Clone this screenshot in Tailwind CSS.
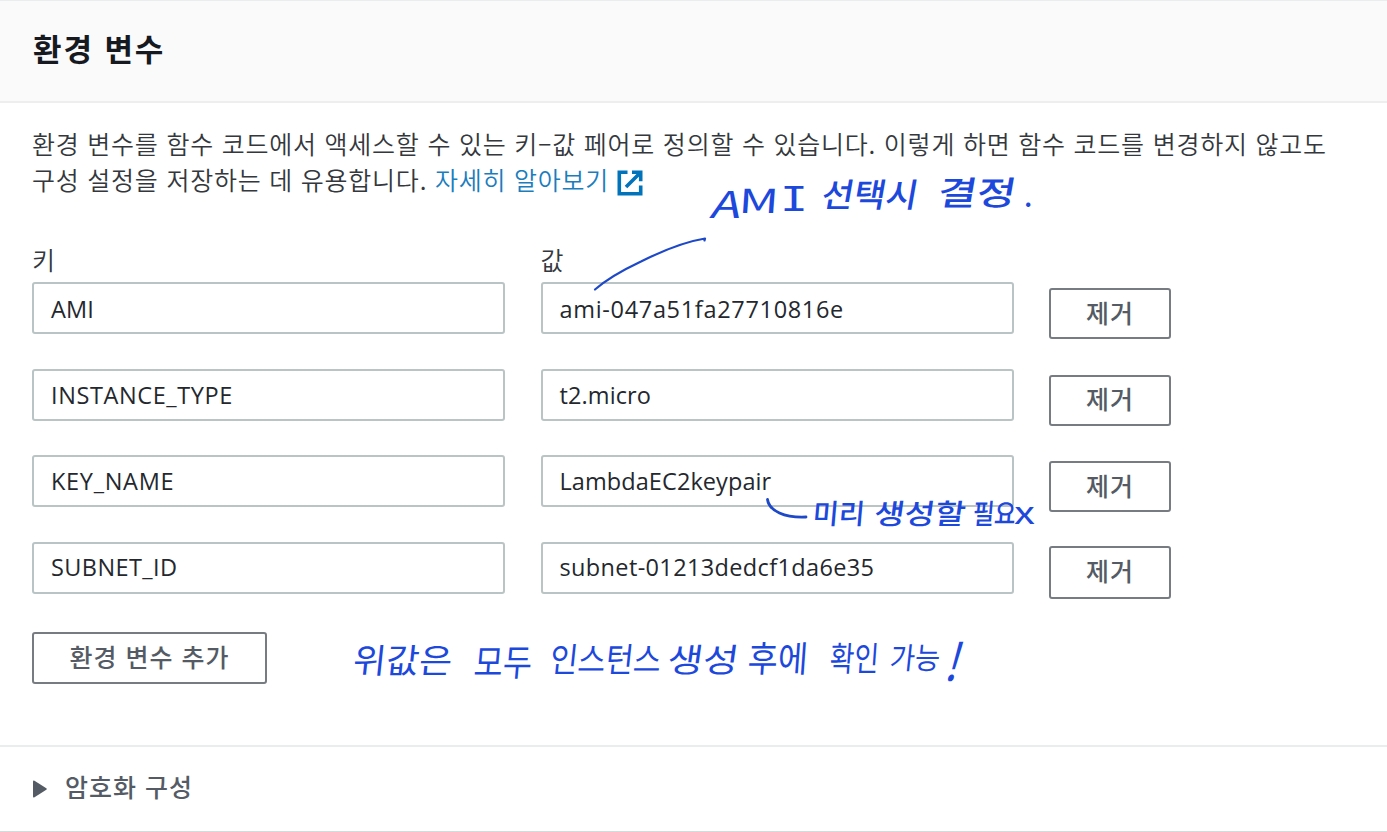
<!DOCTYPE html>
<html lang="ko">
<head>
<meta charset="utf-8">
<title>환경 변수</title>
<script src="https://cdn.jsdelivr.net/npm/@tailwindcss/browser@4"></script>
</head>
<body class="bg-white">
<main class="relative flex h-[832px] w-[1387px] flex-col overflow-hidden border-b border-[#d5dbdb] bg-white font-['Noto_Sans_CJK_KR',sans-serif] text-[#34383d]">
  <header class="flex h-[103px] shrink-0 items-center border-t border-b-2 border-t-[#eaeded] border-b-[#eeeeee] bg-[#fafafa] px-[33px] pb-1.5">
    <h1 class="text-[31px] font-bold tracking-[1.9px] text-[#16191f]">환경 변수</h1>
  </header>

  <section class="flex h-[642px] shrink-0 flex-col px-8 pt-[22px]">
    <p class="text-[25px] leading-9 font-[350] tracking-[0.77px] whitespace-nowrap">환경 변수를 함수 코드에서 액세스할 수 있는 키–값 페어로 정의할 수 있습니다. 이렇게 하면 함수 코드를 변경하지 않고도<br>구성 설정을 저장하는 데 유용합니다. <a class="text-[#1a7dbd]">자세히 알아보기<svg class="ml-[8px] inline-block h-[26px] w-[26px] align-[-6px]" viewBox="0 0 26 26" fill="none" stroke="#0073bb" stroke-width="3.6"><path d="M10.5 2.3H2.3v21.4h21.4v-8.2M15 2.3h8.7v8.9M23 3 9 17"/></svg></a></p>

    <div class="mt-[44px] grid h-[41px] grid-cols-[473px_473px] gap-x-[35.5px] text-[25px] leading-9 font-[350]">
      <span>키</span><span>값</span>
    </div>

    <div class="flex flex-col gap-[34.5px] font-['Open_Sans','Noto_Sans_CJK_KR',sans-serif] text-[23.5px] text-[#24282e]">
      <div class="flex h-[52px] gap-[35.5px]">
        <div class="flex w-[473px] items-center rounded-[3px] border-2 border-[#bac4c4] px-[17px] pt-[3px]"><span class="tracking-[0.1px]">AMI</span></div>
        <div class="flex w-[473px] items-center rounded-[3px] border-2 border-[#bac4c4] px-[17px] pt-[3px]"><span class="tracking-[0.68px]">ami-047a51fa27710816e</span></div>
        <button class="mt-1.5 h-[51px] w-[122px] rounded-[3px] border-2 border-[#777c83] pb-[3px] font-['Noto_Sans_CJK_KR',sans-serif] text-[25px] leading-none font-medium tracking-[1px] text-[#545b64]">제거</button>
      </div>
      <div class="flex h-[52px] gap-[35.5px]">
        <div class="flex w-[473px] items-center rounded-[3px] border-2 border-[#bac4c4] px-[17px] pt-[2px]"><span class="tracking-[0.6px]">INSTANCE_TYPE</span></div>
        <div class="flex w-[473px] items-center rounded-[3px] border-2 border-[#bac4c4] px-[17px] pt-[2px]"><span class="tracking-[0.1px]">t2.micro</span></div>
        <button class="mt-1.5 h-[51px] w-[122px] rounded-[3px] border-2 border-[#777c83] pb-[3px] font-['Noto_Sans_CJK_KR',sans-serif] text-[25px] leading-none font-medium tracking-[1px] text-[#545b64]">제거</button>
      </div>
      <div class="flex h-[52px] gap-[35.5px]">
        <div class="flex w-[473px] items-center rounded-[3px] border-2 border-[#bac4c4] px-[17px] pt-[2px]"><span class="tracking-[0.7px]">KEY_NAME</span></div>
        <div class="flex w-[473px] items-center rounded-[3px] border-2 border-[#bac4c4] px-[17px] pt-[2px]"><span class="tracking-[0.08px]">LambdaEC2keypair</span></div>
        <button class="mt-1.5 h-[51px] w-[122px] rounded-[3px] border-2 border-[#777c83] pb-[3px] font-['Noto_Sans_CJK_KR',sans-serif] text-[25px] leading-none font-medium tracking-[1px] text-[#545b64]">제거</button>
      </div>
      <div class="flex h-[52px] gap-[35.5px]">
        <div class="flex w-[473px] items-center rounded-[3px] border-2 border-[#bac4c4] px-[17px]"><span class="tracking-[0.4px]">SUBNET_ID</span></div>
        <div class="flex w-[473px] items-center rounded-[3px] border-2 border-[#bac4c4] px-[17px]"><span class="tracking-[0.36px]">subnet-01213dedcf1da6e35</span></div>
        <button class="mt-1 h-[53px] w-[122px] rounded-[3px] border-2 border-[#777c83] pb-[3px] font-['Noto_Sans_CJK_KR',sans-serif] text-[25px] leading-none font-medium tracking-[1px] text-[#545b64]">제거</button>
      </div>
    </div>

    <button class="mt-[38px] h-[52px] w-[235px] shrink-0 rounded-[3px] border-2 border-[#777c83] pb-[3px] text-[25px] leading-none font-medium tracking-[1px] text-[#545b64]">환경 변수 추가</button>
  </section>

  <section class="flex flex-1 items-center gap-[17px] border-t-2 border-[#eaeded] px-8 pb-[5px] text-[#545b64]">
    <svg class="mt-1 h-[18px] w-4" viewBox="0 0 16 18" fill="#545b64"><path d="M1 1.6Q1 0 2.5.8L14.3 8.2Q15.5 9 14.3 9.8L2.5 17.2Q1 18 1 16.4Z"/></svg>
    <h2 class="text-[25px] font-medium tracking-[1px]">암호화 구성</h2>
  </section>

  <!-- Pen notes over the form -->
  <svg class="pointer-events-none absolute inset-0 h-[832px] w-[1387px]" viewBox="0 0 1387 832" fill="#1d48dc" font-family="'Noto Sans CJK KR', sans-serif" font-weight="400">
    <g fill="none" stroke="#1d48c8" stroke-width="2.2" stroke-linecap="round" stroke-linejoin="round">
      <path d="M595 289.5C607 279 623 270 641 261.5C662 251 683 242 705 238.5L704.5 240.5"/>
      <path d="M767.5 499.5C769 511 785 518 806 517" stroke-width="2.8"/>
    </g>
    <g font-size="33" font-weight="500">
      <g font-size="37" font-weight="400">
        <text transform="translate(709 218) skewX(-14)" textLength="30" lengthAdjust="spacingAndGlyphs">A</text>
        <text transform="translate(738 213) skewX(-4)" font-size="33" textLength="40" lengthAdjust="spacingAndGlyphs">M</text>
        <text transform="translate(780 211)" font-family="'DejaVu Sans Mono', monospace" font-size="33" textLength="28" lengthAdjust="spacingAndGlyphs">I</text>
      </g>
      <text transform="translate(820 207) skewX(-10)" textLength="96" lengthAdjust="spacingAndGlyphs">선택시</text>
      <text transform="translate(936 205) skewX(-10)" textLength="78" lengthAdjust="spacingAndGlyphs">결정</text>
      <text transform="translate(1024 207)" font-size="28">.</text>
    </g>
    <g font-size="28" font-weight="500">
      <text transform="translate(812 524) skewX(-5)" textLength="52" lengthAdjust="spacingAndGlyphs">미리</text>
      <text transform="translate(873 524) skewX(-8)" textLength="91" lengthAdjust="spacingAndGlyphs">생성할</text>
      <text transform="translate(972 524) skewX(-5)" textLength="43" lengthAdjust="spacingAndGlyphs">필요</text>
      <text transform="translate(1014 524)" font-size="32" font-weight="400" textLength="21" lengthAdjust="spacingAndGlyphs">x</text>
    </g>
    <g font-size="34">
      <text transform="translate(352 673) skewX(-6)" textLength="99" lengthAdjust="spacingAndGlyphs">위값은</text>
      <text transform="translate(473 676) skewX(-5)" font-size="37" textLength="58" lengthAdjust="spacingAndGlyphs">모두</text>
      <text transform="translate(549 672) skewX(-6)" textLength="111" lengthAdjust="spacingAndGlyphs">인스턴스</text>
      <text transform="translate(666 672) skewX(-8)" font-size="33" textLength="71" lengthAdjust="spacingAndGlyphs">생성</text>
      <text transform="translate(747 672) skewX(-4)" font-size="36" textLength="60" lengthAdjust="spacingAndGlyphs">후에</text>
      <text transform="translate(829 671) skewX(-4)" textLength="49" lengthAdjust="spacingAndGlyphs">확인</text>
      <text transform="translate(889 669) skewX(-6)" textLength="50" lengthAdjust="spacingAndGlyphs" font-size="30">가능</text>
      <text transform="translate(943 681) skewX(-16)" font-size="52" textLength="14" lengthAdjust="spacingAndGlyphs">!</text>
    </g>
  </svg>
</main>
</body>
</html>
